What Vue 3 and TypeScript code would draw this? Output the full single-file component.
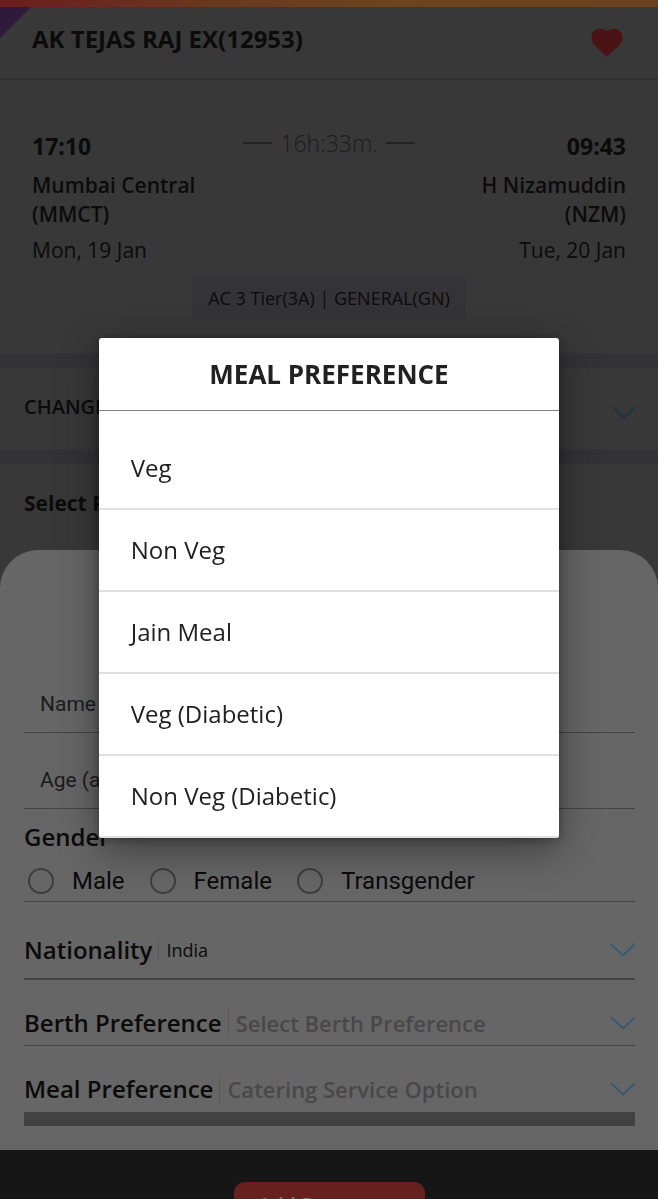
<script setup lang="ts">
import { ref } from 'vue'

interface Choice {
  id: string
  label: string
  placeholder: string
  options: string[]
}

const meals: string[] = ['Veg', 'Non Veg', 'Jain Meal', 'Veg (Diabetic)', 'Non Veg (Diabetic)']
const genders: string[] = ['Male', 'Female', 'Transgender']
const choices: Choice[] = [
  { id: 'nationality', label: 'Nationality', placeholder: '', options: ['India'] },
  { id: 'berth', label: 'Berth Preference', placeholder: 'Select Berth Preference', options: [] },
  { id: 'meal', label: 'Meal Preference', placeholder: 'Catering Service Option', options: meals },
]

const gender = ref('')
const selected = ref<Record<string, string>>({ nationality: 'India', berth: '', meal: '' })
const dialogOpen = ref(true)

function pickMeal(meal: string): void {
  selected.value.meal = meal
  dialogOpen.value = false
}
</script>

<template>
  <div class="app">
    <div class="stripe"></div>
    <header class="train">
      <span class="corner"></span>
      <h1>AK TEJAS RAJ EX(12953)</h1>
      <button class="fav" type="button" aria-label="Favourite">
        <svg viewBox="0 0 32 30" width="32" height="30" aria-hidden="true">
          <path d="M16 29 L4 17.5 C-1 12.5 0 5.500 3.500 2.800 C7.500 -.3 13 .5 16 3.500 C19 .5 24.500 -.3 28.500 2.800 C32 5.500 33 12.500 28 17.500 Z" />
        </svg>
      </button>
    </header>

    <section class="journey">
      <div class="times">
        <strong>17:10</strong>
        <span class="duration"><i></i>16h:33m.<i></i></span>
        <strong>09:43</strong>
      </div>
      <div class="stations">
        <div class="station">
          <p class="place">Mumbai Central<br />(MMCT)</p>
          <p class="date">Mon, 19 Jan</p>
        </div>
        <div class="station end">
          <p class="place">H Nizamuddin<br />(NZM)</p>
          <p class="date">Tue, 20 Jan</p>
        </div>
      </div>
      <p class="chip">AC 3 Tier(3A) | GENERAL(GN)</p>
    </section>

    <button class="boarding" type="button">
      <span>CHANGE BOARDING STATION</span>
      <svg class="chevron" viewBox="0 0 26 14" width="26" height="14" aria-hidden="true"><path d="M2 1 L14 12.500 L26 1" /></svg>
    </button>

    <h2 class="select-title">Select Passengers</h2>

    <form class="sheet" @submit.prevent>
      <div class="field">
        <input type="text" aria-label="Name" placeholder="Name" />
      </div>
      <div class="field age">
        <input type="text" aria-label="Age" placeholder="Age (as per ID)" />
      </div>
      <fieldset class="gender">
        <legend>Gender</legend>
        <div class="radios">
          <label v-for="g in genders" :key="g">
            <input v-model="gender" type="radio" name="gender" :value="g" />{{ g }}
          </label>
        </div>
      </fieldset>
      <div v-for="c in choices" :key="c.id" class="choice" :class="c.id">
        <label :for="c.id">{{ c.label }}</label>
        <select :id="c.id" v-model="selected[c.id]" :class="{ empty: !selected[c.id] }">
          <option v-if="c.placeholder" value="">{{ c.placeholder }}</option>
          <option v-for="o in c.options" :key="o" :value="o">{{ o }}</option>
        </select>
        <svg class="chevron" viewBox="0 0 26 14" width="26" height="14" aria-hidden="true"><path d="M2 1 L14 12.500 L26 1" /></svg>
      </div>
    </form>

    <footer class="actions">
      <button type="button">Add Passenger</button>
    </footer>

    <div v-if="dialogOpen" class="overlay">
      <div class="dialog" role="dialog" aria-modal="true" aria-labelledby="dialog-title">
        <h2 id="dialog-title">MEAL PREFERENCE</h2>
        <ul>
          <li v-for="m in meals" :key="m">
            <button type="button" @click="pickMeal(m)">{{ m }}</button>
          </li>
        </ul>
      </div>
    </div>
  </div>
</template>

<style>
body {
  margin: 0;
  background: #161616;
}
</style>

<style scoped>
.app {
  height: 100vh;
  overflow: hidden;
  display: flex;
  flex-direction: column;
  background: #383838;
  color: #0b0b0b;
  font-family: "Open Sans", "Noto Sans", sans-serif;
}
.app > * {
  flex-shrink: 0;
}
h1, h2, p, ul, fieldset, legend {
  margin: 0;
  padding: 0;
}
button, input, select {
  font-family: inherit;
  color: inherit;
  margin: 0;
  padding: 0;
  border: 0;
  background: none;
}
.stripe {
  height: 7px;
  background: linear-gradient(90deg, #6c1d1d, #6a3a1e 35%, #6c441f 60%, #69431f);
}
.train {
  position: relative;
  display: flex;
  align-items: center;
  justify-content: space-between;
  height: 71px;
  padding: 0 35px 0 32px;
  border-bottom: 2px solid #303030;
}
.corner {
  position: absolute;
  top: 0;
  left: 0;
  width: 31px;
  height: 31px;
  background: #301a3c;
  clip-path: polygon(0 0, 100% 0, 0 100%);
}
.train h1 {
  font-size: 24px;
  line-height: 32px;
  font-weight: 700;
  padding-bottom: 8px;
}
.fav {
  display: flex;
}
.fav path {
  fill: #4a1212;
}
.journey {
  display: flex;
  flex-direction: column;
  padding: 45px 32px 33px;
}
.times {
  display: flex;
  justify-content: space-between;
  align-items: center;
  font-size: 23px;
  line-height: 36px;
}
.times strong {
  font-weight: 700;
}
.duration {
  display: flex;
  align-items: center;
  gap: 8px;
  color: #1c1c1c;
  font-weight: 300;
  padding-bottom: 5px;
}
.duration i {
  width: 29px;
  height: 2px;
  background: #222;
}
.stations {
  display: flex;
  justify-content: space-between;
  margin-top: 5px;
}
.end {
  text-align: right;
}
.place {
  font-size: 21px;
  line-height: 29px;
  font-weight: 600;
}
.date {
  font-size: 21px;
  line-height: 30px;
  margin-top: 6px;
}
.chip {
  align-self: center;
  margin-top: 12px;
  padding: 0 16px;
  font-size: 18px;
  line-height: 43px;
  background: #343438;
}
.boarding {
  display: flex;
  align-items: center;
  justify-content: space-between;
  height: 111px;
  padding: 0 22px 0 24px;
  border-top: 15px solid #333336;
  border-bottom: 15px solid #333336;
  font-size: 20px;
  font-weight: 600;
}
.boarding span {
  padding-bottom: 4px;
}
.chevron {
  fill: none;
  stroke: #375a74;
  stroke-width: 2;
}
.boarding .chevron {
  stroke: #203543;
  margin-top: 6px;
}
.select-title {
  padding: 24px 24px 32px;
  font-size: 21px;
  line-height: 30px;
  font-weight: 700;
}
.sheet {
  box-sizing: border-box;
  padding: 125px 23px 24px 24px;
  border-radius: 38px 38px 0 0;
  background: #666;
}
.field {
  display: flex;
  height: 57px;
  padding: 0 16px;
  border-bottom: 1px solid #434343;
}
.field.age {
  height: 75px;
}
.field.age input {
  padding-top: 18px;
}
.field input {
  flex: 1;
  font-family: Roboto, sans-serif;
  font-size: 21px;
}
.field input::placeholder {
  color: #1b1b1b;
  opacity: 1;
}
.gender {
  border: 0;
  border-bottom: 1px solid #434343;
}
.gender legend {
  font-size: 24px;
  line-height: 34px;
  font-weight: 600;
  padding-top: 11px;
}
.radios {
  display: flex;
  gap: 25px;
  padding: 14px 0 7px 4px;
  font-family: Roboto, sans-serif;
  font-size: 24px;
  line-height: 26px;
}
.radios label {
  display: flex;
  align-items: center;
  gap: 18px;
}
.radios input {
  appearance: none;
  width: 26px;
  height: 26px;
  border: 2px solid #3d3d3d;
  border-radius: 50%;
}
.choice {
  display: flex;
  align-items: center;
  box-sizing: border-box;
  height: 66px;
  padding-top: 20px;
  border-bottom: 1px solid #434343;
}
.choice label {
  font-size: 24px;
  line-height: 34px;
  font-weight: 600;
}
.choice select {
  flex: 1;
  min-width: 0;
  appearance: none;
  height: 22px;
  margin-left: 6px;
  padding-left: 7px;
  border-left: 1px solid #5a5a5a;
  font-size: 18px;
  line-height: 22px;
}
.choice select.empty {
  height: 30px;
  font-size: 22px;
  line-height: 30px;
  color: #484848;
  font-weight: 600;
}
.choice.nationality {
  height: 78px;
  border-bottom-width: 2px;
}
.choice.meal {
  height: 80px;
  border-bottom: 14px solid #424242;
}
.actions {
  flex: 1 0 49px;
  display: flex;
  justify-content: center;
  align-items: flex-start;
  padding-top: 32px;
  box-sizing: border-box;
  background: #161616;
}
.actions button {
  flex-shrink: 0;
  width: 191px;
  height: 45px;
  border-radius: 11px;
  background: #66211f;
  color: #777;
  font-size: 20px;
  font-weight: 600;
}
.overlay {
  position: fixed;
  inset: 0;
  display: flex;
  align-items: center;
  justify-content: center;
  padding-bottom: 23px;
}
.dialog {
  width: 70%;
  overflow: hidden;
  border-radius: 3px;
  background: #fff;
  color: #212123;
  box-shadow: 0 12px 40px rgba(0, 0, 0, 0.4), 0 2px 8px rgba(0, 0, 0, 0.3);
}
.dialog h2 {
  font-size: 26px;
  line-height: 72px;
  font-weight: 700;
  text-align: center;
  border-bottom: 1px solid #808080;
}
.dialog ul {
  list-style: none;
  padding-top: 17px;
}
.dialog li {
  border-bottom: 2px solid #e0e0e0;
}
.dialog li button {
  display: block;
  width: 100%;
  padding: 0 32px;
  font-size: 24px;
  line-height: 80px;
  text-align: left;
}
</style>
